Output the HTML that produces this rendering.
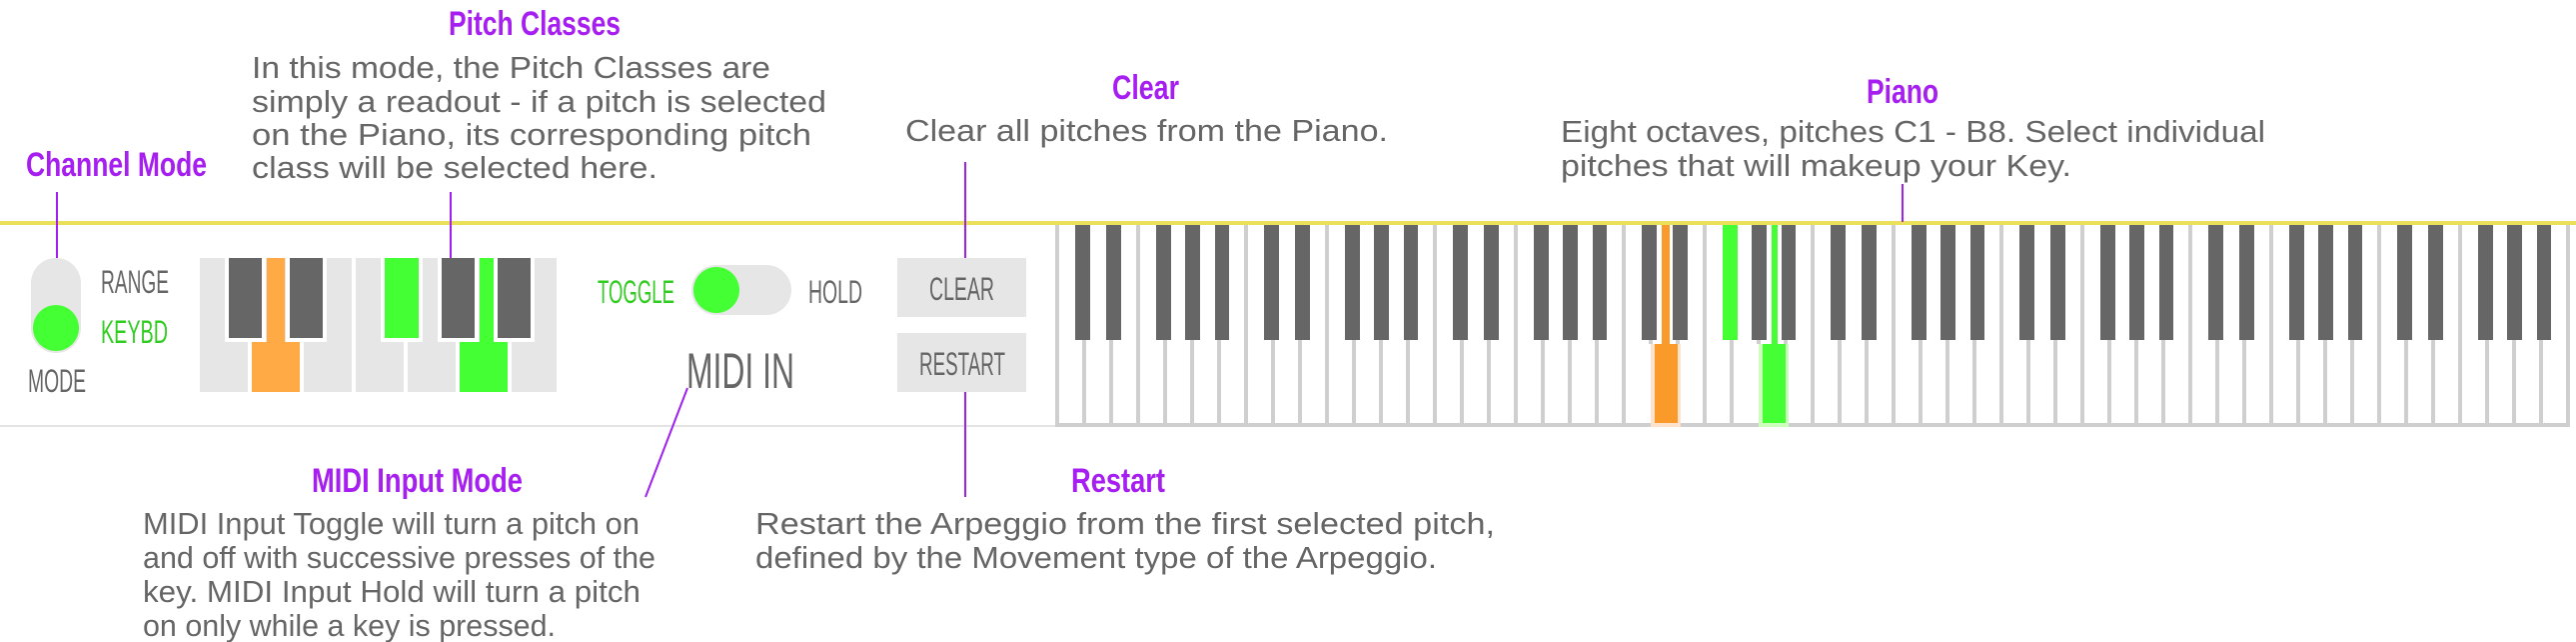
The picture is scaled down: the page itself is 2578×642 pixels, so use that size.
<!DOCTYPE html>
<html><head><meta charset="utf-8"><style>
html,body{margin:0;padding:0;background:#fff;width:2578px;height:642px;overflow:hidden}
svg{display:block}
.t{font-family:"Liberation Sans Narrow","Liberation Sans",sans-serif;font-weight:bold;fill:#a61ff0;font-size:34px}
.b{font-family:"Liberation Sans",sans-serif;fill:#666;font-size:31px}
.l{font-family:"Liberation Sans Narrow","Liberation Sans",sans-serif;fill:#666;font-size:32px}
.g{fill:#33cc22}
</style></head><body>
<svg width="2578" height="642" viewBox="0 0 2578 642" xmlns="http://www.w3.org/2000/svg">
<rect x="0" y="221" width="2578" height="4" fill="#ebe05a"/>
<rect x="0" y="425" width="1056" height="2" fill="#e4e4e4"/>

<rect x="31" y="258" width="50" height="95" rx="25" fill="#e6e6e6"/>
<circle cx="56" cy="328" r="23" fill="#44ff33"/>
<text class="l" x="101" y="293" textLength="68" lengthAdjust="spacingAndGlyphs">RANGE</text>
<text class="l g" x="101" y="343" textLength="67" lengthAdjust="spacingAndGlyphs">KEYBD</text>
<text class="l" x="28" y="392" textLength="58" lengthAdjust="spacingAndGlyphs">MODE</text>

<rect x="200" y="258" width="152" height="84" fill="#e6e6e6"/>
<rect x="356" y="258" width="201" height="84" fill="#e6e6e6"/>
<g fill="#e6e6e6">
<rect x="200" y="342" width="48" height="50"/><rect x="304" y="342" width="48" height="50"/>
<rect x="356" y="342" width="48" height="50"/><rect x="408" y="342" width="48" height="50"/><rect x="512" y="342" width="45" height="50"/>
</g>
<g fill="#fff">
<rect x="225" y="258" width="41" height="84"/><rect x="286" y="258" width="41" height="84"/>
<rect x="381" y="258" width="42" height="84"/><rect x="438" y="258" width="41" height="84"/><rect x="494" y="258" width="41" height="84"/>
</g>
<g fill="#666">
<rect x="229" y="258" width="33" height="80"/><rect x="290" y="258" width="33" height="80"/>
<rect x="442" y="258" width="33" height="80"/><rect x="498" y="258" width="33" height="80"/>
</g>
<rect x="385" y="258" width="34" height="80" fill="#44ff33"/>
<rect x="267" y="258" width="18" height="90" fill="#ffaa44"/>
<rect x="252" y="342" width="48" height="50" fill="#ffaa44"/>
<rect x="480" y="258" width="14" height="90" fill="#44ff33"/>
<rect x="460" y="342" width="48" height="50" fill="#44ff33"/>

<text class="l g" x="598" y="303" textLength="77" lengthAdjust="spacingAndGlyphs">TOGGLE</text>
<rect x="692" y="265" width="100" height="50" rx="25" fill="#e6e6e6"/>
<circle cx="717" cy="290" r="23" fill="#44ff33"/>
<text class="l" x="809" y="303" textLength="54" lengthAdjust="spacingAndGlyphs">HOLD</text>
<text class="l" x="687" y="388" style="font-size:50px" textLength="108" lengthAdjust="spacingAndGlyphs">MIDI IN</text>

<rect x="898" y="258" width="129" height="59" fill="#e6e6e6"/>
<text class="l" x="930" y="300" textLength="65" lengthAdjust="spacingAndGlyphs">CLEAR</text>
<rect x="898" y="333" width="129" height="59" fill="#e6e6e6"/>
<text class="l" x="920" y="375" textLength="86" lengthAdjust="spacingAndGlyphs">RESTART</text>

<g fill="#cfcfcf">
<rect x="1056" y="225" width="4" height="202"/>
<rect x="1056" y="423" width="1516" height="4"/>
<rect x="2568" y="225" width="4" height="202"/>
</g>
<rect x="1652" y="344" width="30" height="83" fill="#ffe2cc"/>
<rect x="1656" y="344" width="23" height="79" fill="#fa9a2a"/>
<rect x="1663" y="225" width="8" height="121" fill="#fa9a2a"/>
<rect x="1760" y="344" width="30" height="83" fill="#ccffbb"/>
<rect x="1764" y="344" width="23" height="79" fill="#44ff33"/>
<rect x="1773" y="225" width="6" height="121" fill="#44ff33"/>

<g stroke="#a020f0" stroke-width="2">
<line x1="57" y1="192" x2="57" y2="258"/>
<line x1="451" y1="192" x2="451" y2="258"/>
<line x1="966" y1="162" x2="966" y2="258"/>
<line x1="1904" y1="184" x2="1904" y2="222"/>
<line x1="966" y1="392" x2="966" y2="497"/>
<line x1="688" y1="388" x2="646" y2="497"/>
</g>

<text class="t" x="449" y="35" textLength="172" lengthAdjust="spacingAndGlyphs">Pitch Classes</text>
<text class="t" x="26" y="176" textLength="181" lengthAdjust="spacingAndGlyphs">Channel Mode</text>
<text class="t" x="1113" y="99" textLength="67" lengthAdjust="spacingAndGlyphs">Clear</text>
<text class="t" x="1868" y="103" textLength="72" lengthAdjust="spacingAndGlyphs">Piano</text>
<text class="t" x="312" y="492" textLength="211" lengthAdjust="spacingAndGlyphs">MIDI Input Mode</text>
<text class="t" x="1072" y="492" textLength="94" lengthAdjust="spacingAndGlyphs">Restart</text>

<text class="b" x="252" y="78" textLength="519" lengthAdjust="spacingAndGlyphs">In this mode, the Pitch Classes are</text>
<text class="b" x="252" y="112" textLength="575" lengthAdjust="spacingAndGlyphs">simply a readout - if a pitch is selected</text>
<text class="b" x="252" y="145" textLength="560" lengthAdjust="spacingAndGlyphs">on the Piano, its corresponding pitch</text>
<text class="b" x="252" y="178" textLength="406" lengthAdjust="spacingAndGlyphs">class will be selected here.</text>

<text class="b" x="906" y="141" textLength="483" lengthAdjust="spacingAndGlyphs">Clear all pitches from the Piano.</text>

<text class="b" x="1562" y="142" textLength="705" lengthAdjust="spacingAndGlyphs">Eight octaves, pitches C1 - B8. Select individual</text>
<text class="b" x="1562" y="176" textLength="511" lengthAdjust="spacingAndGlyphs">pitches that will makeup your Key.</text>

<text class="b" x="143" y="534" textLength="497" lengthAdjust="spacingAndGlyphs">MIDI Input Toggle will turn a pitch on</text>
<text class="b" x="143" y="568" textLength="513" lengthAdjust="spacingAndGlyphs">and off with successive presses of the</text>
<text class="b" x="143" y="602" textLength="498" lengthAdjust="spacingAndGlyphs">key. MIDI Input Hold will turn a pitch</text>
<text class="b" x="143" y="636" textLength="413" lengthAdjust="spacingAndGlyphs">on only while a key is pressed.</text>

<text class="b" x="756" y="534" textLength="740" lengthAdjust="spacingAndGlyphs">Restart the Arpeggio from the first selected pitch,</text>
<text class="b" x="756" y="568" textLength="682" lengthAdjust="spacingAndGlyphs">defined by the Movement type of the Arpeggio.</text>

<g fill="#cfcfcf">
<rect x="1083" y="225" width="4" height="200"/><rect x="1110" y="225" width="4" height="200"/><rect x="1137" y="225" width="4" height="200"/><rect x="1164" y="225" width="4" height="200"/><rect x="1191" y="225" width="4" height="200"/><rect x="1218" y="225" width="4" height="200"/>
<rect x="1245" y="225" width="4" height="200"/><rect x="1272" y="225" width="4" height="200"/><rect x="1299" y="225" width="4" height="200"/><rect x="1326" y="225" width="4" height="200"/><rect x="1353" y="225" width="4" height="200"/><rect x="1380" y="225" width="4" height="200"/><rect x="1407" y="225" width="4" height="200"/>
<rect x="1434" y="225" width="4" height="200"/><rect x="1461" y="225" width="4" height="200"/><rect x="1488" y="225" width="4" height="200"/><rect x="1515" y="225" width="4" height="200"/><rect x="1542" y="225" width="4" height="200"/><rect x="1569" y="225" width="4" height="200"/><rect x="1596" y="225" width="4" height="200"/>
<rect x="1623" y="225" width="4" height="200"/><rect x="1704" y="225" width="4" height="200"/><rect x="1731" y="225" width="4" height="200"/><rect x="1758" y="225" width="4" height="119"/><rect x="1785" y="225" width="4" height="119"/>
<rect x="1812" y="225" width="4" height="200"/><rect x="1839" y="225" width="4" height="200"/><rect x="1866" y="225" width="4" height="200"/><rect x="1893" y="225" width="4" height="200"/><rect x="1920" y="225" width="4" height="200"/><rect x="1947" y="225" width="4" height="200"/><rect x="1974" y="225" width="4" height="200"/>
<rect x="2001" y="225" width="4" height="200"/><rect x="2028" y="225" width="4" height="200"/><rect x="2055" y="225" width="4" height="200"/><rect x="2082" y="225" width="4" height="200"/><rect x="2109" y="225" width="4" height="200"/><rect x="2136" y="225" width="4" height="200"/><rect x="2163" y="225" width="4" height="200"/>
<rect x="2190" y="225" width="4" height="200"/><rect x="2217" y="225" width="4" height="200"/><rect x="2244" y="225" width="4" height="200"/><rect x="2271" y="225" width="4" height="200"/><rect x="2298" y="225" width="4" height="200"/><rect x="2325" y="225" width="4" height="200"/><rect x="2352" y="225" width="4" height="200"/>
<rect x="2379" y="225" width="4" height="200"/><rect x="2406" y="225" width="4" height="200"/><rect x="2433" y="225" width="4" height="200"/><rect x="2460" y="225" width="4" height="200"/><rect x="2487" y="225" width="4" height="200"/><rect x="2514" y="225" width="4" height="200"/><rect x="2541" y="225" width="4" height="200"/>
<rect x="1650" y="225" width="4" height="119"/><rect x="1677" y="225" width="4" height="119"/>
</g>
<g fill="#666">
<rect x="1076" y="225" width="15" height="115"/><rect x="1107" y="225" width="15" height="115"/><rect x="1157" y="225" width="15" height="115"/><rect x="1186" y="225" width="15" height="115"/><rect x="1216" y="225" width="14" height="115"/>
<rect x="1265" y="225" width="15" height="115"/><rect x="1296" y="225" width="15" height="115"/><rect x="1346" y="225" width="15" height="115"/><rect x="1375" y="225" width="15" height="115"/><rect x="1405" y="225" width="14" height="115"/>
<rect x="1454" y="225" width="15" height="115"/><rect x="1485" y="225" width="15" height="115"/><rect x="1535" y="225" width="15" height="115"/><rect x="1564" y="225" width="15" height="115"/><rect x="1594" y="225" width="14" height="115"/>
<rect x="1643" y="225" width="15" height="115"/><rect x="1674" y="225" width="15" height="115"/><rect x="1753" y="225" width="15" height="115"/><rect x="1783" y="225" width="14" height="115"/>
<rect x="1832" y="225" width="15" height="115"/><rect x="1863" y="225" width="15" height="115"/><rect x="1913" y="225" width="15" height="115"/><rect x="1942" y="225" width="15" height="115"/><rect x="1972" y="225" width="14" height="115"/>
<rect x="2021" y="225" width="15" height="115"/><rect x="2052" y="225" width="15" height="115"/><rect x="2102" y="225" width="15" height="115"/><rect x="2131" y="225" width="15" height="115"/><rect x="2161" y="225" width="14" height="115"/>
<rect x="2210" y="225" width="15" height="115"/><rect x="2241" y="225" width="15" height="115"/><rect x="2291" y="225" width="15" height="115"/><rect x="2320" y="225" width="15" height="115"/><rect x="2350" y="225" width="14" height="115"/>
<rect x="2399" y="225" width="15" height="115"/><rect x="2430" y="225" width="15" height="115"/><rect x="2480" y="225" width="15" height="115"/><rect x="2509" y="225" width="15" height="115"/><rect x="2539" y="225" width="14" height="115"/>
</g>
<rect x="1724" y="225" width="15" height="115" fill="#44ff33"/>
</svg>
</body></html>
